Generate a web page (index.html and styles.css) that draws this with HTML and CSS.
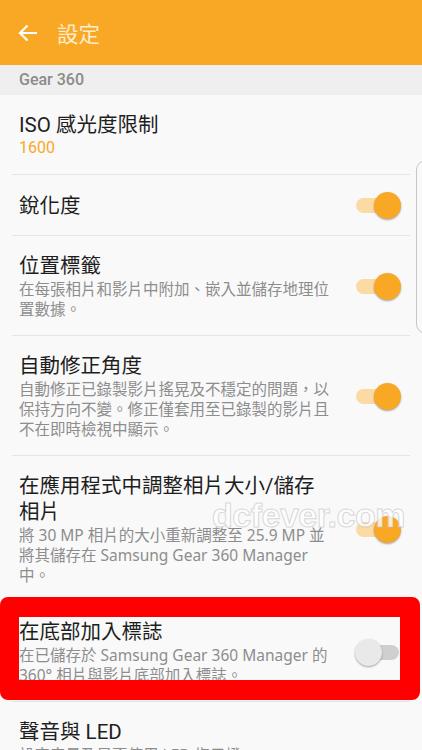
FILE: index.html
```html
<!DOCTYPE html>
<html lang="zh-Hant">
<head>
    <meta charset="UTF-8">
    <meta name="viewport" content="width=device-width, initial-scale=1.0">
    <title>設定</title>
    <link rel="stylesheet" href="styles.css">
</head>
<body>
    <header class="appbar">
        <svg class="back" width="20" height="18" viewBox="0 0 20 18">
            <path d="M19 9H2M9.5 1.5L2 9l7.5 7.5" fill="none" stroke="#fff" stroke-width="2.2"/>
        </svg>
        <h1>設定</h1>
    </header>

    <div class="section">Gear 360</div>

    <ul class="list">
        <li class="item">
            <div class="text">
                <div class="title">ISO 感光度限制</div>
                <div class="value">1600</div>
            </div>
        </li>
        <li class="item">
            <div class="text">
                <div class="title">銳化度</div>
            </div>
            <span class="toggle on"></span>
        </li>
        <li class="item">
            <div class="text">
                <div class="title">位置標籤</div>
                <div class="desc">在每張相片和影片中附加、嵌入並儲存地理位置數據。</div>
            </div>
            <span class="toggle on"></span>
        </li>
        <li class="item">
            <div class="text">
                <div class="title">自動修正角度</div>
                <div class="desc">自動修正已錄製影片搖晃及不穩定的問題，以保持方向不變。修正僅套用至已錄製的影片且不在即時檢視中顯示。</div>
            </div>
            <span class="toggle on"></span>
        </li>
        <li class="item">
            <div class="text">
                <div class="title">在應用程式中調整相片大小/儲存相片</div>
                <div class="desc">將 30 MP 相片的大小重新調整至 25.9 MP 並將其儲存在 Samsung Gear 360 Manager 中。</div>
            </div>
            <span class="toggle on"></span>
        </li>
        <li class="item">
            <div class="text">
                <div class="title">在底部加入標誌</div>
                <div class="desc">在已儲存於 Samsung Gear 360 Manager 的 360° 相片與影片底部加入標誌。</div>
            </div>
            <span class="toggle"></span>
        </li>
        <li class="item">
            <div class="text">
                <div class="title">聲音與 LED</div>
                <div class="desc">設定音量及是否使用 LED 指示燈。</div>
            </div>
        </li>
    </ul>

    <!-- overlays -->
    <div class="scroll-edge"></div>
    <div class="watermark">dcfever.com</div>
    <div class="highlight"></div>
</body>
</html>
```

FILE: styles.css
```css
body {
    margin: 0;
    height: 750px;
    overflow: hidden;
    background-color: #f9f9f9;
    font-family: Roboto, "Noto Sans CJK TC", sans-serif;
    position: relative;
}
.appbar {
    height: 65px;
    background-color: #f9a826;
    display: flex;
    align-items: center;
    padding-left: 18px;
}
.back {
    margin-top: 1px;
}
.appbar h1 {
    margin: 0 0 0 19px;
    font-size: 21.5px;
    font-weight: normal;
    color: #fdedcc;
}
.section {
    height: 30px;
    line-height: 30px;
    background-color: #efefef;
    padding-left: 19px;
    font-size: 16px;
    font-weight: 500;
    color: #8b8b8b;
}
.list {
    list-style: none;
    margin: 0;
    padding: 0;
}
.item {
    margin: 0 12px;
    padding: 17px 9px 16px 7px;
    border-bottom: 1px solid #e5e5e5;
    display: flex;
    align-items: center;
}
.text {
    width: 312px;
}
.title {
    font-size: 20.5px;
    line-height: 26px;
    color: #1e1e1e;
}
.value {
    font-size: 16px;
    line-height: 20px;
    color: #f9a826;
}
.desc {
    font-family: "Noto Sans", "Noto Sans CJK TC", sans-serif;
    font-size: 15.5px;
    line-height: 20px;
    color: #8d8d8d;
}
/* switches */
.toggle {
    position: relative;
    width: 46px;
    height: 27px;
    margin-left: auto;
    flex: none;
}
.toggle::before {
    content: "";
    position: absolute;
    left: 10px;
    right: 2px;
    top: 6px;
    height: 15px;
    border-radius: 8px;
    background-color: #cfcfcf;
}
.toggle::after {
    content: "";
    position: absolute;
    left: 0;
    top: 0;
    width: 27px;
    height: 27px;
    border-radius: 50%;
    background-color: #e9e9e9;
    box-shadow: 0 1px 2px rgba(0, 0, 0, 0.35);
}
.toggle.on::before {
    left: 1px;
    right: 10px;
    background-color: #fcdaa3;
}
.toggle.on::after {
    left: auto;
    right: 0;
    background-color: #f9a826;
}
/* overlays */
.scroll-edge {
    position: absolute;
    left: 416px;
    top: 160px;
    width: 20px;
    height: 172px;
    border: 1px solid #c6c6c6;
    border-radius: 10px;
}
.watermark {
    position: absolute;
    left: 212px;
    top: 496px;
    font-family: "Liberation Sans", Arial, sans-serif;
    font-size: 34px;
    font-weight: bold;
    letter-spacing: -0.5px;
    color: rgba(255, 255, 255, 0.8);
    -webkit-text-stroke: 1px rgba(190, 190, 190, 0.6);
}
.highlight {
    position: absolute;
    left: 0;
    top: 597px;
    width: 420px;
    height: 103px;
    box-sizing: border-box;
    border: 20px solid #ff0000;
    border-left-width: 19px;
    border-radius: 8px;
}
```
